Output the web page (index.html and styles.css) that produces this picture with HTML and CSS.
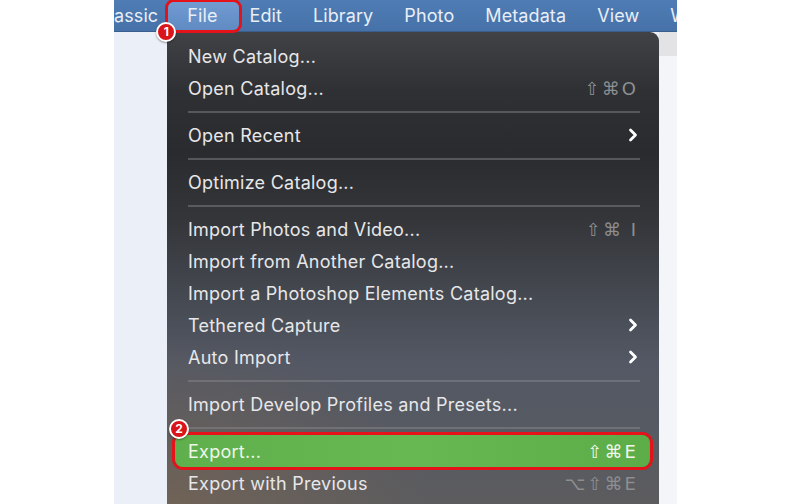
FILE: index.html
```html
<!DOCTYPE html>
<html>
<head>
<meta charset="utf-8">
<link rel="stylesheet" href="styles.css">
</head>
<body>
<div class="frame">
  <div class="menubar">
    <span class="mb-item">assic</span>
    <span class="mb-item file">File<span class="badge b1">1</span></span>
    <span class="mb-item">Edit</span>
    <span class="mb-item">Library</span>
    <span class="mb-item">Photo</span>
    <span class="mb-item">Metadata</span>
    <span class="mb-item">View</span>
    <span class="mb-item">W</span>
  </div>
  <div class="content">
    <div class="menu">
      <div class="item"><span>New Catalog...</span></div>
      <div class="item"><span>Open Catalog...</span><span class="sc">⇧⌘O</span></div>
      <div class="sep"></div>
      <div class="item"><span>Open Recent</span><svg class="chev" width="10" height="14" viewBox="0 0 10 14"><polyline points="2.5,2 7.5,7 2.5,12" fill="none" stroke="#fff" stroke-width="2.8" stroke-linecap="round" stroke-linejoin="round"/></svg></div>
      <div class="sep"></div>
      <div class="item"><span>Optimize Catalog...</span></div>
      <div class="sep"></div>
      <div class="item"><span>Import Photos and Video...</span><span class="sc">⇧⌘ I</span></div>
      <div class="item"><span>Import from Another Catalog...</span></div>
      <div class="item"><span>Import a Photoshop Elements Catalog...</span></div>
      <div class="item"><span>Tethered Capture</span><svg class="chev" width="10" height="14" viewBox="0 0 10 14"><polyline points="2.5,2 7.5,7 2.5,12" fill="none" stroke="#fff" stroke-width="2.8" stroke-linecap="round" stroke-linejoin="round"/></svg></div>
      <div class="item"><span>Auto Import</span><svg class="chev" width="10" height="14" viewBox="0 0 10 14"><polyline points="2.5,2 7.5,7 2.5,12" fill="none" stroke="#fff" stroke-width="2.8" stroke-linecap="round" stroke-linejoin="round"/></svg></div>
      <div class="sep"></div>
      <div class="item"><span>Import Develop Profiles and Presets...</span></div>
      <div class="sep"></div>
      <div class="item active"><span>Export...</span><span class="sc">⇧⌘E</span><span class="badge b2">2</span></div>
      <div class="item"><span>Export with Previous</span><span class="sc">⌥⇧⌘E</span></div>
    </div>
    <div class="right"></div>
  </div>
</div>
</body>
</html>
```

FILE: styles.css
```css
html, body {
  margin: 0;
  padding: 0;
  background: #ffffff;
}
body {
  font-family: Inter, "Noto Sans", "DejaVu Sans", sans-serif;
}
.frame {
  margin-left: 114px;
  width: 563px;
  height: 504px;
  overflow: hidden;
  background: linear-gradient(#e0e2e6 0, #e0e2e6 14px, #ebf0f8 14px);
  display: flex;
  flex-direction: column;
}
.menubar {
  height: 32px;
  flex: none;
  background: linear-gradient(#4f7cb4, #4672a9);
  display: flex;
  align-items: center;
  gap: 31px;
  white-space: nowrap;
  color: #e9eef7;
  font-size: 18px;
  letter-spacing: 0.1px;
  border-bottom: 1px solid #3b5f8d;
  box-sizing: border-box;
}
.mb-item {
  flex: none;
  line-height: 28px;
}
.file {
  position: relative;
  padding: 0 21px 0 19px;
  margin: 0 -20px 0 -21px;
  background: linear-gradient(#719bd1, #5f8ac3);
  border-radius: 6px;
  box-shadow: 0 0 0 3px #e5121a;
}
.badge {
  position: absolute;
  width: 16px;
  height: 16px;
  border-radius: 50%;
  background: #d9141a;
  border: 2px solid #fff;
  color: #fff;
  font-size: 12px;
  font-weight: 700;
  letter-spacing: 0;
  line-height: 16px;
  text-align: center;
  box-shadow: 0 1px 2px rgba(0,0,0,0.4);
}
.b1 {
  left: -12px;
  top: 20px;
}
.b2 {
  left: -6px;
  top: -16px;
}
.content {
  flex: 1;
  display: flex;
  padding-left: 53px;
}
.menu {
  width: 492px;
  flex: none;
  box-sizing: border-box;
  padding-top: 8px;
  border-top-right-radius: 9px;
  background:
    radial-gradient(ellipse 260px 170px at 0% 100%, rgba(125,103,82,0.6), rgba(125,103,82,0) 100%),
    linear-gradient(#414245 0, #2f3033 60px, #2a2b2e 120px, #34363a 190px, #464a52 270px, #535864 330px, #565a62 400px, #5c5c5e 470px);
  color: #e7e7e9;
  font-size: 18px;
  letter-spacing: 0.25px;
}
.item {
  position: relative;
  height: 32px;
  display: flex;
  align-items: center;
  justify-content: space-between;
  padding: 0 23px 0 21px;
  white-space: nowrap;
}
.sc {
  color: #8d8e92;
  font-family: "DejaVu Sans", sans-serif;
  font-size: 18px;
  letter-spacing: 2px;
  margin-right: -2px;
}
.chev {
  margin-right: -2px;
}
.sep {
  height: 15px;
  display: flex;
  align-items: center;
  padding: 0 19px 0 21px;
}
.sep::before {
  content: "";
  flex: 1;
  height: 2px;
  background: rgba(140,140,145,0.45);
}
.item.active {
  margin: 0 9px 0 8px;
  padding: 0 14px 0 13px;
  border-radius: 8px;
  background: linear-gradient(90deg, #5fb04c, #67b752 50%, #5cad48);
  box-shadow: 0 0 0 3px #e5121a;
  color: #eef6ea;
}
.item.active .sc {
  color: #f0f6ec;
}
.right {
  flex: 1;
  background: linear-gradient(#e3e3e5 0, #e3e3e5 24px, #f3f5f9 24px);
}
```
